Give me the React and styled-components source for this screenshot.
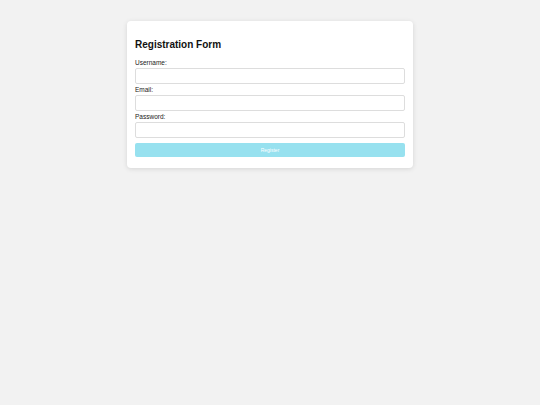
import React from "react";
import styled, { createGlobalStyle } from "styled-components";

const GlobalStyle = createGlobalStyle`
  html, body {
    margin: 0;
    padding: 0;
    background: #f2f2f2;
    font-family: "Liberation Sans", Arial, sans-serif;
  }
`;

const Page = styled.div`
  min-height: 405px;
  padding-top: 21px;
  box-sizing: border-box;
`;

const Card = styled.form`
  width: 286px;
  margin: 0 auto;
  background: #fff;
  border-radius: 4px;
  box-shadow: 0 1px 5px rgba(0, 0, 0, 0.12);
  padding: 18px 8px 11px;
  box-sizing: border-box;
`;

const Title = styled.h2`
  margin: 0 0 8px;
  font-size: 10px;
  line-height: 12px;
  font-weight: bold;
  color: #111;
`;

const Label = styled.label`
  display: block;
  font-size: 6.5px;
  line-height: 8px;
  color: #222;
  margin-bottom: 1px;
`;

const Input = styled.input`
  display: block;
  width: 100%;
  height: 16px;
  box-sizing: border-box;
  border: 1px solid #ddd;
  border-radius: 2px;
  margin: 0 0 2px;
  padding: 0 4px;
  font-size: 7px;
  font-family: inherit;
`;

const Button = styled.button`
  display: block;
  width: 100%;
  height: 14px;
  margin-top: 5px;
  border: none;
  border-radius: 2px;
  background: #97e1ef;
  color: #fff;
  font-size: 5px;
  font-family: inherit;
  padding: 0;
`;

export default function App() {
  return (
    <>
      <GlobalStyle />
      <Page>
        <Card onSubmit={(e) => e.preventDefault()}>
          <Title>Registration Form</Title>
          <Label htmlFor="username">Username:</Label>
          <Input id="username" type="text" />
          <Label htmlFor="email">Email:</Label>
          <Input id="email" type="email" />
          <Label htmlFor="password">Password:</Label>
          <Input id="password" type="password" />
          <Button type="submit">Register</Button>
        </Card>
      </Page>
    </>
  );
}
